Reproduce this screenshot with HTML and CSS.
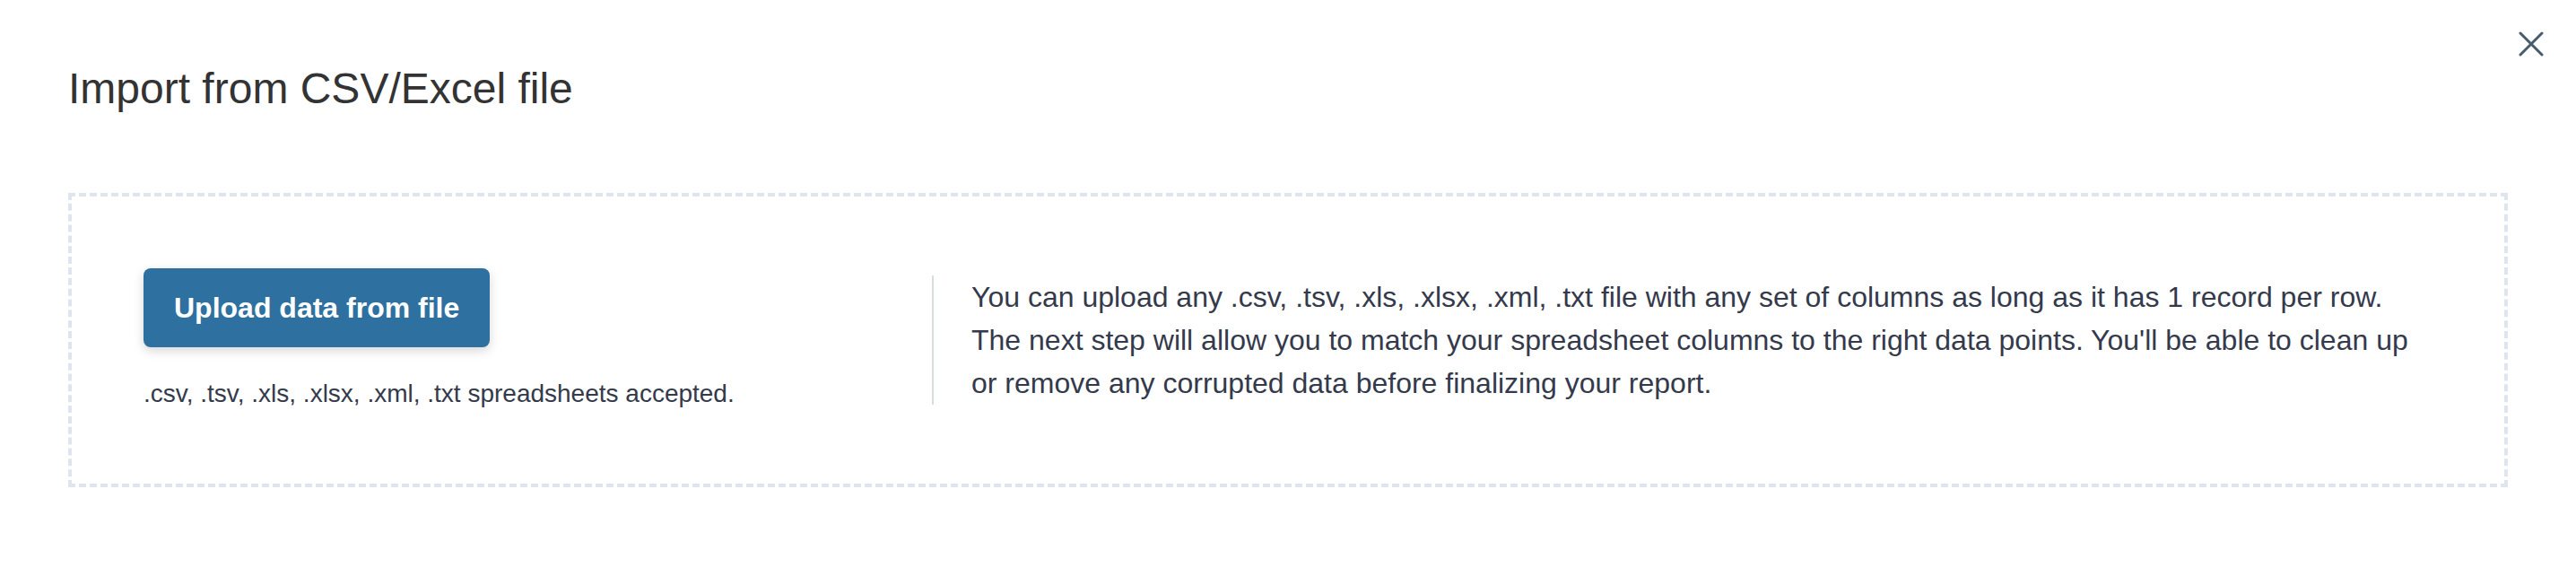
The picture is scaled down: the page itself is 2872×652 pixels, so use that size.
FILE: index.html
```html
<!DOCTYPE html>
<html lang="en">
<head>
<meta charset="utf-8">
<title>Import from CSV/Excel file</title>
<link rel="stylesheet" href="styles.css">
</head>
<body>
<div class="modal">
  <button class="close" aria-label="Close">
    <svg width="28" height="28" viewBox="0 0 28 28" fill="none" stroke="#475b6f" stroke-width="3" stroke-linecap="round">
      <path d="M2 2L26 26M26 2L2 26"/>
    </svg>
  </button>
  <h1 class="title">Import from CSV/Excel file</h1>
  <div class="dropzone">
    <div class="upload-col">
      <button class="upload-btn">Upload data from file</button>
      <p class="accepted">.csv, .tsv, .xls, .xlsx, .xml, .txt spreadsheets accepted.</p>
    </div>
    <div class="info-col">
      <p class="info">You can upload any .csv, .tsv, .xls, .xlsx, .xml, .txt file with any set of columns as long as it has 1 record per row. The next step will allow you to match your spreadsheet columns to the right data points. You'll be able to clean up or remove any corrupted data before finalizing your report.</p>
    </div>
  </div>
</div>
</body>
</html>
```

FILE: styles.css
```css
html, body {
  margin: 0;
  padding: 0;
  background: #ffffff;
}

body {
  font-family: "Liberation Sans", Arial, Helvetica, sans-serif;
  color: #343a4b;
}

.modal {
  position: relative;
  padding: 71px 76px 0 76px;
}

.close {
  position: absolute;
  top: 35px;
  right: 36px;
  width: 28px;
  height: 28px;
  padding: 0;
  margin: 0;
  border: 0;
  background: transparent;
  display: flex;
}

.title {
  margin: 0 0 88px 0;
  font-size: 48px;
  line-height: 56px;
  font-weight: 400;
  color: #333333;
}

.dropzone {
  border: 4px dashed #dfe5ee;
  padding: 80px;
  display: flex;
  align-items: center;
}

.upload-col {
  flex: 0 0 879px;
  display: flex;
  flex-direction: column;
  align-items: flex-start;
}

.upload-btn {
  font-family: "Liberation Sans", Arial, Helvetica, sans-serif;
  font-size: 32px;
  font-weight: 700;
  line-height: 32px;
  color: #ffffff;
  background: #2e70a0;
  border: 0;
  border-radius: 8px;
  padding: 28px 34px;
  box-shadow: 0 4px 12px rgba(0, 0, 0, 0.16);
}

.accepted {
  margin: 32px 0 0 0;
  font-size: 28px;
  line-height: 40px;
}

.info-col {
  flex: 1 1 auto;
  border-left: 2px solid #d7dee0;
  padding-left: 42px;
}

.info {
  margin: 0;
  font-size: 32px;
  line-height: 48px;
}
```
